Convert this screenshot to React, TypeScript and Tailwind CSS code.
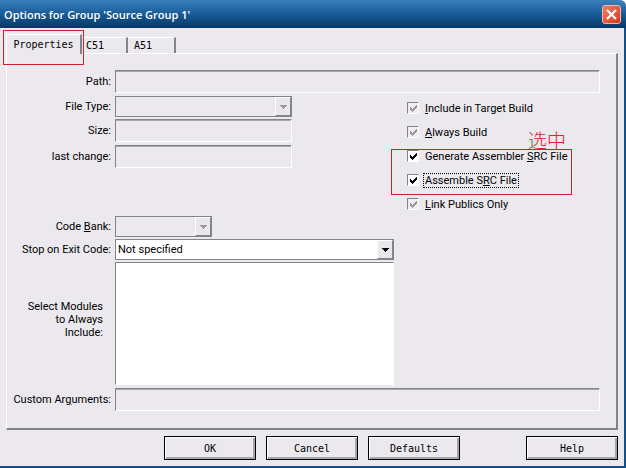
import React, { useState } from 'react';

const SUNKEN = 'border border-t-[#85838a] border-l-[#85838a] border-r-white border-b-white';

interface FieldRowProps {
  id: string;
  label: React.ReactNode;
  className?: string;
  children: React.ReactNode;
}

const FieldRow: React.FC<FieldRowProps> = ({ id, label, className = '', children }) => (
  <div className={`flex items-center gap-1 ${className}`}>
    <label htmlFor={id} className="w-[104px] shrink-0 text-right whitespace-nowrap">
      {label}
    </label>
    {children}
  </div>
);

const ReadOnlyField: React.FC<{ id: string }> = ({ id }) => (
  <input
    id={id}
    type="text"
    disabled
    className={`h-[23px] min-w-0 flex-1 bg-[#ebe9ed] px-1 shadow-[inset_0_1px_0_#a9a7ac] ${SUNKEN}`}
  />
);

interface ComboProps {
  id: string;
  disabled?: boolean;
  width: string;
  options: string[];
}

const Combo: React.FC<ComboProps> = ({ id, disabled, width, options }) => (
  <div className={`relative ${width}`}>
    <select
      id={id}
      disabled={disabled}
      className={`block h-[21px] w-full appearance-none rounded-none border border-[#85838a] pl-0.5 text-black opacity-100 ${
        disabled ? 'bg-[#ebe9ed]' : 'bg-white'
      }`}
    >
      {options.map((o) => (
        <option key={o}>{o}</option>
      ))}
    </select>
    <span className="pointer-events-none absolute top-px right-px bottom-px flex w-4 items-center justify-center border border-t-white border-r-[#85838a] border-b-[#85838a] border-l-white bg-[#e9e7ec]">
      <svg width="7" height="4" viewBox="0 0 7 4" shapeRendering="crispEdges">
        <path d="M0 0h7v1H6v1H5v1H4v1H3V3H2V2H1V1H0z" fill={disabled ? '#9b999e' : '#000'} />
      </svg>
    </span>
  </div>
);

interface CheckProps {
  disabled?: boolean;
  focused?: boolean;
  children: React.ReactNode;
}

const Check: React.FC<CheckProps> = ({ disabled, focused, children }) => {
  const [checked, setChecked] = useState(true);
  return (
    <label className="flex h-6 items-center gap-1 whitespace-nowrap">
      <span className="relative block size-3">
        <input
          type="checkbox"
          checked={checked}
          disabled={disabled}
          onChange={(e) => setChecked(e.target.checked)}
          className={`block size-3 appearance-none ${SUNKEN} ${disabled ? 'bg-[#efedf0]' : 'bg-white'}`}
        />
        {checked && (
          <svg
            className="pointer-events-none absolute inset-0"
            width="12"
            height="12"
            viewBox="0 0 12 12"
            shapeRendering="crispEdges"
          >
            <path
              d="M3 5h1v1h1v1h1V6h1V5h1V4h1V3h1v3H9v1H8v1H7v1H6v1H5V9H4V8H3z"
              fill={disabled ? '#9b999e' : '#000'}
            />
          </svg>
        )}
      </span>
      <span className={`border px-px ${focused ? 'border-dotted border-black' : 'border-transparent'}`}>
        {children}
      </span>
    </label>
  );
};

const DialogButton: React.FC<{ children: string; className?: string }> = ({ children, className = '' }) => (
  <button
    type="button"
    className={`h-6 w-[92px] border border-black bg-[#ebe9ed] font-['DejaVu_Sans_Mono',monospace] text-[10px] shadow-[inset_1px_1px_0_#fff,inset_-2px_-2px_0_#a5a3a8] ${className}`}
  >
    {children}
  </button>
);

const App: React.FC = () => (
  <div className="flex min-h-screen flex-col overflow-hidden rounded-tr-md bg-[#ebe9ed] font-[Roboto,'Liberation_Sans',sans-serif] text-[11px] leading-[13px] text-black">
    <header className="flex h-7 items-center justify-between bg-linear-to-b from-[#3b82bd] via-[#1b5f9c] via-45% to-[#053866] pr-[5px] pl-1">
      <h1 className="font-['Open_Sans',sans-serif] text-[11px] font-semibold text-white">
        Options for Group 'Source Group 1'
      </h1>
      <button
        type="button"
        aria-label="Close"
        className="flex size-[19px] items-center justify-center rounded-[3px] border border-[#f3b5a5] bg-linear-to-br from-[#ee7d62] to-[#d8341a]"
      >
        <svg width="11" height="11" viewBox="0 0 11 11" stroke="#fff" strokeWidth="2.2">
          <path d="M1 1l9 9M10 1l-9 9" />
        </svg>
      </button>
    </header>

    <main className="flex-1 border-r-2 border-b-2 border-[#164f88] pr-1.5 pb-1.5 pl-1.5">
      <div className="relative flex h-[25px] items-end font-['DejaVu_Sans_Mono',monospace] text-[10px]" role="tablist">
        <button
          type="button"
          role="tab"
          aria-selected="true"
          className="relative top-px z-10 h-5 w-[76px] border-t border-r-2 border-l border-t-white border-r-[#85838a] border-l-white bg-[#ebe9ed] pb-px"
        >
          Properties
        </button>
        <button
          type="button"
          role="tab"
          aria-selected="false"
          className="h-4 w-[46px] border-t border-r-2 border-t-white border-r-[#85838a] pl-1 text-left"
        >
          C51
        </button>
        <button
          type="button"
          role="tab"
          aria-selected="false"
          className="h-4 w-12 border-t border-r-2 border-t-white border-r-[#85838a] pl-1.5 text-left"
        >
          A51
        </button>
        <div className="pointer-events-none absolute top-0.5 -left-[3px] z-20 h-[35px] w-[81px] border border-[#c8242c]" />
      </div>

      <form className="border border-t-white border-r-2 border-b-2 border-r-[#85838a] border-b-[#85838a] border-l-white pt-4 pb-[17px]">
        <FieldRow id="path" label="Path:" className="pr-4">
          <ReadOnlyField id="path" />
        </FieldRow>

        <div className="mt-[3px] flex gap-[13px]">
          <div className="w-[387px]">
            <FieldRow id="file-type" label="File Type:">
              <Combo id="file-type" disabled width="w-[177px]" options={[]} />
            </FieldRow>
            <FieldRow id="size" label="Size:" className="mt-0.5 pr-[102px]">
              <ReadOnlyField id="size" />
            </FieldRow>
            <FieldRow id="last-change" label="last change:" className="mt-[3px] pr-[102px]">
              <ReadOnlyField id="last-change" />
            </FieldRow>
            <FieldRow id="code-bank" label={<>Code <u>B</u>ank:</>} className="mt-12">
              <Combo id="code-bank" disabled width="w-[97px]" options={[]} />
            </FieldRow>
            <FieldRow id="exit-code" label="Stop on Exit Code:" className="mt-0.5">
              <Combo id="exit-code" width="flex-1" options={['Not specified']} />
            </FieldRow>
            <div className="mt-0.5 flex items-center gap-1">
              <label htmlFor="modules" className="w-[104px] pr-2 pb-2 text-right">
                Select Modules
                <br />
                to Always
                <br />
                Include:
              </label>
              <select
                id="modules"
                multiple
                className={`h-[123px] min-w-0 flex-1 rounded-none bg-white ${SUNKEN}`}
              />
            </div>
          </div>

          <div>
            <Check disabled>
              <u>I</u>nclude in Target Build
            </Check>
            <Check disabled>
              <u>A</u>lways Build
            </Check>
            <div className="relative">
              <Check>
                Generate Assembler <u>S</u>RC File
              </Check>
              <Check focused>
                Assemble S<u>R</u>C File
              </Check>
              <div className="pointer-events-none absolute top-[5px] -left-4 h-[46px] w-[181px] border border-[#c8242c]" />
              <span className="pointer-events-none absolute -top-[14px] left-[121px] font-['Noto_Sans_CJK_SC',sans-serif] text-[19px] leading-5 font-light whitespace-nowrap text-[#e8202c]">
                选中
              </span>
            </div>
            <Check disabled>
              <u>L</u>ink Publics Only
            </Check>
          </div>
        </div>

        <FieldRow id="custom-args" label={<>Custom Ar<u>g</u>uments:</>} className="mt-[3px] pr-4">
          <ReadOnlyField id="custom-args" />
        </FieldRow>
      </form>

      <footer className="mt-1.5 flex gap-2.5 pl-[158px]">
        <DialogButton>OK</DialogButton>
        <DialogButton>Cancel</DialogButton>
        <DialogButton>Defaults</DialogButton>
        <DialogButton className="ml-auto">Help</DialogButton>
      </footer>
    </main>
  </div>
);

export default App;
